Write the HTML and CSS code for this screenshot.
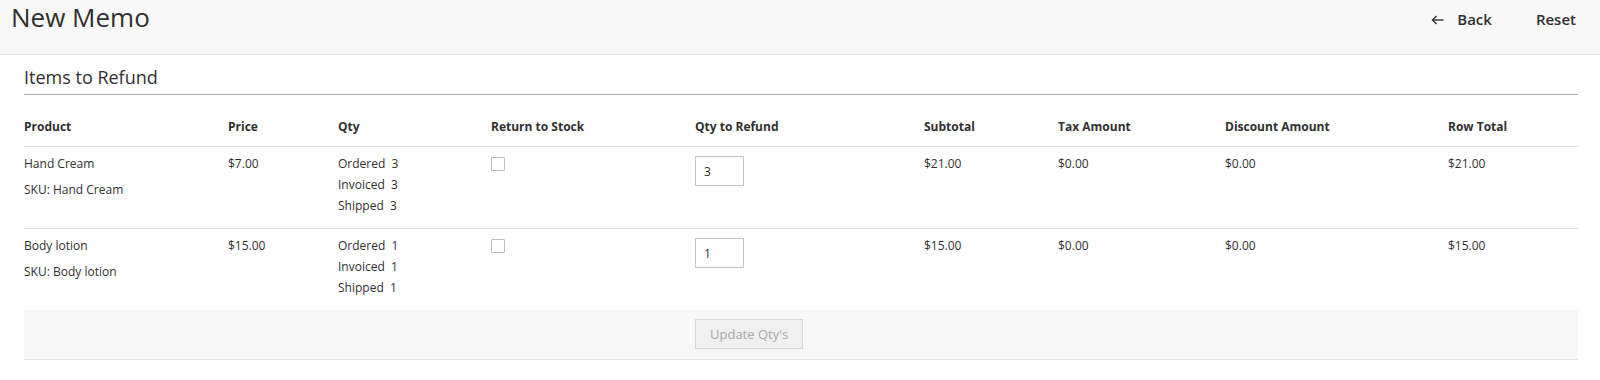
FILE: index.html
```html
<!DOCTYPE html>
<html lang="en">
<head>
  <meta charset="UTF-8">
  <meta name="viewport" content="width=device-width, initial-scale=1.0">
  <title>New Memo</title>
  <link rel="stylesheet" href="styles.css">
</head>
<body>

<header class="page-header">
  <h1 class="page-title">New Memo</h1>
  <div class="page-actions">
    <button class="action action-back">
      <svg class="icon-back" width="13" height="10" viewBox="0 0 13 10" fill="none" stroke="#303030" stroke-width="1.4">
        <path d="M12.5 5H1.5"/>
        <path d="M5.5 1L1.5 5L5.5 9"/>
      </svg>
      Back
    </button>
    <button class="action">Reset</button>
  </div>
</header>

<div class="content">
  <h2 class="section-title">Items to Refund</h2>

  <table class="items-table">
    <colgroup>
      <col class="col-product">
      <col class="col-price">
      <col class="col-qty">
      <col class="col-stock">
      <col class="col-refund">
      <col class="col-subtotal">
      <col class="col-tax">
      <col class="col-discount">
      <col class="col-total">
    </colgroup>
    <thead>
      <tr>
        <th>Product</th>
        <th>Price</th>
        <th>Qty</th>
        <th>Return to Stock</th>
        <th>Qty to Refund</th>
        <th>Subtotal</th>
        <th>Tax Amount</th>
        <th>Discount Amount</th>
        <th>Row Total</th>
      </tr>
    </thead>
    <tbody>
      <tr>
        <td>
          <div class="product-name">Hand Cream</div>
          <div>SKU: Hand Cream</div>
        </td>
        <td>$7.00</td>
        <td>
          <div>Ordered&nbsp; 3</div>
          <div>Invoiced&nbsp; 3</div>
          <div>Shipped&nbsp; 3</div>
        </td>
        <td><input type="checkbox" class="check"></td>
        <td><input type="text" class="qty-input" value="3"></td>
        <td>$21.00</td>
        <td>$0.00</td>
        <td>$0.00</td>
        <td>$21.00</td>
      </tr>
      <tr>
        <td>
          <div class="product-name">Body lotion</div>
          <div>SKU: Body lotion</div>
        </td>
        <td>$15.00</td>
        <td>
          <div>Ordered&nbsp; 1</div>
          <div>Invoiced&nbsp; 1</div>
          <div>Shipped&nbsp; 1</div>
        </td>
        <td><input type="checkbox" class="check"></td>
        <td><input type="text" class="qty-input" value="1"></td>
        <td>$15.00</td>
        <td>$0.00</td>
        <td>$0.00</td>
        <td>$15.00</td>
      </tr>
    </tbody>
    <tfoot>
      <tr>
        <td colspan="4"></td>
        <td colspan="5"><button class="btn-update" disabled>Update Qty's</button></td>
      </tr>
    </tfoot>
  </table>
</div>

</body>
</html>
```

FILE: styles.css
```css
body {
  margin: 0;
  font-family: "Open Sans", "Liberation Sans", sans-serif;
  color: #303030;
  background-color: #fff;
}
.page-header {
  display: flex;
  justify-content: space-between;
  align-items: flex-start;
  height: 54px;
  padding: 0 24px 0 11px;
  background-color: #f8f8f8;
  border-bottom: 1px solid #e3e3e3;
}
.page-title {
  margin: 1px 0 0;
  font-size: 26px;
  font-weight: 400;
  line-height: 33px;
  color: #303030;
}
.page-actions {
  display: flex;
  gap: 44px;
  margin-top: 9px;
}
.action {
  display: flex;
  align-items: center;
  gap: 13px;
  padding: 0;
  border: none;
  background: none;
  font-family: inherit;
  font-size: 15px;
  font-weight: 600;
  line-height: 20px;
  color: #303030;
  cursor: pointer;
}
.icon-back {
  margin-top: 1px;
}
.content {
  padding: 0 22px 0 24px;
}
.section-title {
  margin: 12px 0 0;
  padding-bottom: 7px;
  font-size: 18px;
  font-weight: 400;
  line-height: 20px;
  border-bottom: 1px solid #adadad;
}
.items-table {
  width: 100%;
  margin-top: 13px;
  border-collapse: collapse;
  table-layout: fixed;
  font-size: 12px;
}
.col-product { width: 204px; }
.col-price { width: 110px; }
.col-qty { width: 153px; }
.col-stock { width: 204px; }
.col-refund { width: 229px; }
.col-subtotal { width: 134px; }
.col-tax { width: 167px; }
.col-discount { width: 223px; }
.col-total { width: auto; }
.items-table th {
  padding: 10px 0;
  text-align: left;
  font-weight: 700;
  line-height: 18px;
  border-bottom: 1px solid #e3e3e3;
}
.items-table tbody td {
  padding: 6px 0 12px;
  vertical-align: top;
  line-height: 21px;
}
.items-table tbody tr + tr td {
  border-top: 1px solid #e3e3e3;
}
.product-name {
  margin-bottom: 5px;
}
.check {
  -webkit-appearance: none;
  appearance: none;
  display: block;
  width: 14px;
  height: 14px;
  margin: 4px 0 0;
  border: 1px solid #bdbdbd;
  border-radius: 1px;
  background: #fff;
}
.qty-input {
  display: block;
  box-sizing: border-box;
  width: 49px;
  height: 30px;
  margin-top: 3px;
  padding: 0 8px;
  border: 1px solid #c2c2c2;
  font-family: inherit;
  font-size: 12px;
  color: #303030;
}
.items-table tfoot td {
  padding: 9px 0 10px;
  background-color: #f8f8f8;
  border-bottom: 1px solid #e3e3e3;
}
.btn-update {
  height: 30px;
  padding: 0 14px;
  font-family: inherit;
  font-size: 13px;
  color: #a8a8a8;
  background-color: #f0f0f0;
  border: 1px solid #d6d6d6;
  border-radius: 0;
}
```
